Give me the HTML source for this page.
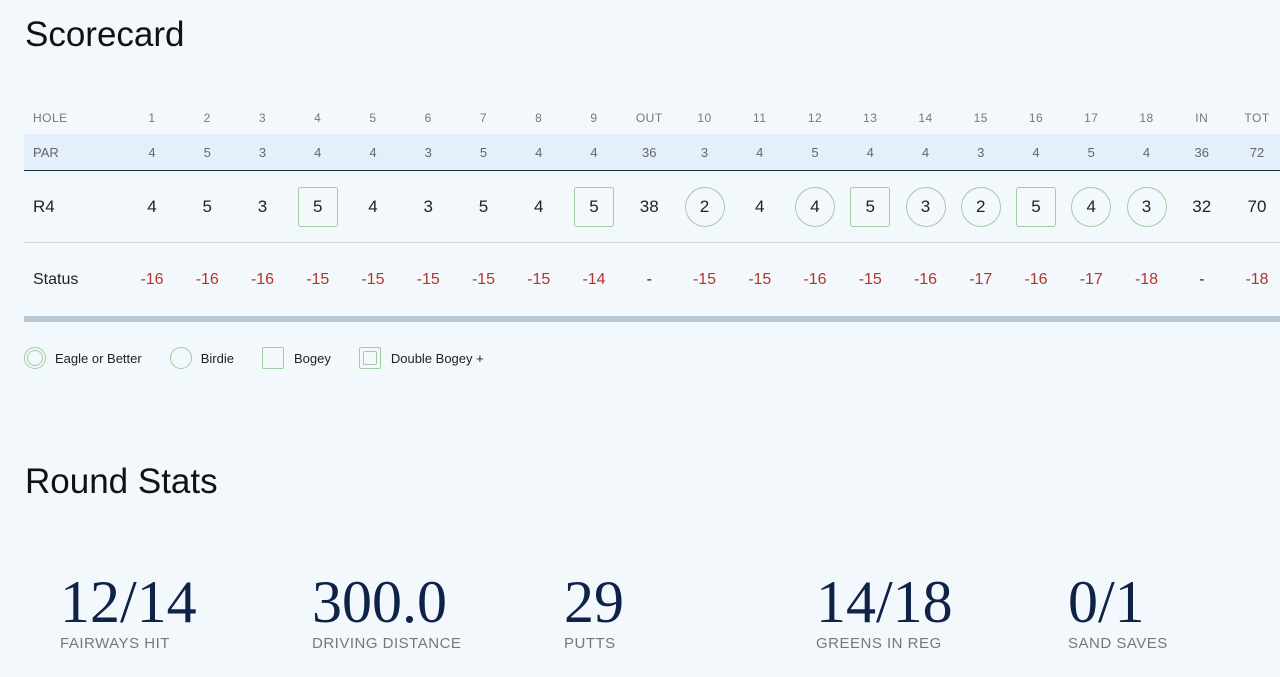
<!DOCTYPE html>
<html><head><style>
body{margin:0;width:1280px;height:677px;overflow:hidden;background:#f3f8fc;font-family:"Liberation Sans",sans-serif;position:relative}
h2{position:absolute;left:25px;margin:0;font-weight:400;font-size:35px;color:#111}
.row{position:absolute;left:24px;width:1270px;display:flex;align-items:center}
.lab{width:100.4px;padding-left:9px;box-sizing:border-box}
.c{width:55.25px;text-align:center;flex:none;display:flex;justify-content:center;align-items:center}
.hd{top:108px;height:20px;font-size:12px;color:#777;letter-spacing:.5px}
.par{top:134px;height:36px;background:#e3effb;font-size:13px;color:#666;border-bottom:1.5px solid #1c2b3a}
.sc{top:171px;height:71px;font-size:17px;color:#222;border-bottom:1px solid #d2dbe3}
.sc .lab{font-size:17px}
.st{top:243px;height:73px;font-size:16px;color:#b3362b;border-bottom:6px solid #b5c8d3}
.st .lab{color:#222;font-size:16px}
.sq,.ci{width:40px;height:40px;border:1px solid #a3cba3;display:flex;align-items:center;justify-content:center;box-sizing:border-box}
.sq{border-radius:3px}.ci{border-radius:50%}
.leg{position:absolute;top:347px;left:24px;font-size:13px;color:#222;display:flex;align-items:center}
.leg span.i{width:20px;height:20px;border:1px solid #a3cba3;box-sizing:border-box;margin-right:11px;display:inline-flex;align-items:center;justify-content:center}
.stat{position:absolute;top:568px}
.stat .n{font-family:"Liberation Serif",serif;font-size:60px;color:#0f2247;line-height:68px}
.stat .l{font-size:15px;color:#777;letter-spacing:.5px;margin-top:-1px}
</style></head><body>
<h2 style="top:15px">Scorecard</h2>
<div class="row hd"><div class="lab">HOLE</div><div class="c">1</div><div class="c">2</div><div class="c">3</div><div class="c">4</div><div class="c">5</div><div class="c">6</div><div class="c">7</div><div class="c">8</div><div class="c">9</div><div class="c">OUT</div><div class="c">10</div><div class="c">11</div><div class="c">12</div><div class="c">13</div><div class="c">14</div><div class="c">15</div><div class="c">16</div><div class="c">17</div><div class="c">18</div><div class="c">IN</div><div class="c">TOT</div></div>
<div class="row par"><div class="lab">PAR</div><div class="c">4</div><div class="c">5</div><div class="c">3</div><div class="c">4</div><div class="c">4</div><div class="c">3</div><div class="c">5</div><div class="c">4</div><div class="c">4</div><div class="c">36</div><div class="c">3</div><div class="c">4</div><div class="c">5</div><div class="c">4</div><div class="c">4</div><div class="c">3</div><div class="c">4</div><div class="c">5</div><div class="c">4</div><div class="c">36</div><div class="c">72</div></div>
<div class="row sc"><div class="lab">R4</div><div class="c">4</div><div class="c">5</div><div class="c">3</div><div class="c"><div class="sq">5</div></div><div class="c">4</div><div class="c">3</div><div class="c">5</div><div class="c">4</div><div class="c"><div class="sq">5</div></div><div class="c">38</div><div class="c"><div class="ci">2</div></div><div class="c">4</div><div class="c"><div class="ci">4</div></div><div class="c"><div class="sq">5</div></div><div class="c"><div class="ci">3</div></div><div class="c"><div class="ci">2</div></div><div class="c"><div class="sq">5</div></div><div class="c"><div class="ci">4</div></div><div class="c"><div class="ci">3</div></div><div class="c">32</div><div class="c">70</div></div>
<div class="row st"><div class="lab">Status</div><div class="c">-16</div><div class="c">-16</div><div class="c">-16</div><div class="c">-15</div><div class="c">-15</div><div class="c">-15</div><div class="c">-15</div><div class="c">-15</div><div class="c">-14</div><div class="c" style="color:#222">-</div><div class="c">-15</div><div class="c">-15</div><div class="c">-16</div><div class="c">-15</div><div class="c">-16</div><div class="c">-17</div><div class="c">-16</div><div class="c">-17</div><div class="c">-18</div><div class="c" style="color:#222">-</div><div class="c">-18</div></div>
<div class="leg"><span class="i" style="border-radius:50%;width:22px;height:22px;margin-right:9px"><span style="width:16px;height:16px;border:1px solid #a3cba3;border-radius:50%;box-sizing:border-box"></span></span>Eagle or Better
<span class="i" style="border-radius:50%;width:22px;height:22px;margin-left:28px;margin-right:9px"></span>Birdie
<span class="i" style="border-radius:2px;width:22px;height:22px;margin-left:28px;margin-right:10px"></span>Bogey
<span class="i" style="border-radius:2px;width:22px;height:22px;margin-left:28px;margin-right:10px"><span style="width:14px;height:14px;border:1px solid #a3cba3;border-radius:2px;box-sizing:border-box"></span></span>Double Bogey +</div>
<h2 style="top:462px">Round Stats</h2>
<div class="stat" style="left:60px"><div class="n">12/14</div><div class="l">FAIRWAYS HIT</div></div>
<div class="stat" style="left:312px"><div class="n">300.0</div><div class="l">DRIVING DISTANCE</div></div>
<div class="stat" style="left:564px"><div class="n">29</div><div class="l">PUTTS</div></div>
<div class="stat" style="left:816px"><div class="n">14/18</div><div class="l">GREENS IN REG</div></div>
<div class="stat" style="left:1068px"><div class="n">0/1</div><div class="l">SAND SAVES</div></div>
</body></html>
